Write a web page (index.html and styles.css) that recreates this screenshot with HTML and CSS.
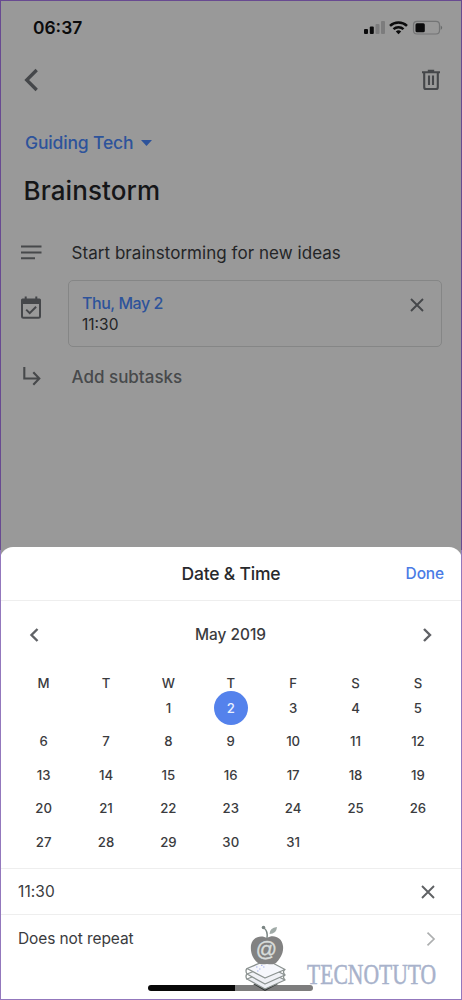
FILE: index.html
```html
<!DOCTYPE html>
<html lang="en">
<head>
<meta charset="utf-8">
<title>Date &amp; Time</title>
<link rel="stylesheet" href="styles.css">
</head>
<body>
<main class="phone">
  <section class="task">
    <header class="status">
      <span class="clock">06:37</span>
      <svg class="status-icons" width="80" height="16" viewBox="0 0 80 16">
        <g fill="#0b0b0c"><rect x="0" y="9" width="4" height="5" rx="1"/><rect x="5.800" y="6.500" width="4" height="7.500" rx="1"/></g>
        <g fill="#7c7c7d"><rect x="11.500" y="4" width="4" height="10" rx="1"/><rect x="17" y="1" width="4" height="13" rx="1"/></g>
        <g fill="none" stroke="#0b0b0c" stroke-width="2.500"><path d="M26 5.800a12.300 12.300 0 0 1 17 0"/><path d="M29.500 9.200a7.300 7.300 0 0 1 10 0"/></g>
        <path d="M31.800 11.600a4 4 0 0 1 5.400 0L34.500 14.300z" fill="#0b0b0c"/>
        <rect x="49.500" y="1.300" width="26" height="12.700" rx="3.500" fill="none" stroke="#747576" stroke-width="1.200"/>
        <rect x="51.500" y="3.200" width="9.300" height="9" rx="1.500" fill="#0b0b0c"/>
        <path d="M76.700 5.500q3 2.200 0 4.400z" fill="#686b6b"/>
      </svg>
    </header>
    <nav class="toolbar">
      <svg width="16" height="24" viewBox="0 0 16 24"><path d="M12.700 2L2.700 12l10 10" fill="none" stroke="#45474a" stroke-width="3.300"/></svg>
      <svg width="20" height="22" viewBox="0 0 20 22"><path d="M1 3.200h18M6.800 1.700h6.400M3.200 3.500V18.200q0 1.800 1.800 1.800h10q1.800 0 1.800-1.800V3.500M8 6.500v9.500M12 6.500v9.500" fill="none" stroke="#45474a" stroke-width="2.100"/></svg>
    </nav>
    <div class="list-name"><span>Guiding Tech</span><svg width="11" height="6" viewBox="0 0 11 6"><path d="M0 0h11L5.500 6z" fill="#2d539b"/></svg></div>
    <h1 class="title">Brainstorm</h1>
    <div class="row details">
      <svg width="22" height="15" viewBox="0 0 22 15"><path d="M1 1.500h20.500M1 7.500h20.500M1 13.300h14" stroke="#47494b" stroke-width="2"/></svg>
      <span class="detail-text">Start brainstorming for new ideas</span>
    </div>
    <div class="row due">
      <svg width="22" height="24" viewBox="0 0 22 24"><path d="M2 5.500h18v14.800q0 1.500-1.500 1.500h-15Q2 21.800 2 20.300z" fill="none" stroke="#45474a" stroke-width="2"/><path d="M1 8V4q0-1.500 1.500-1.500h17Q21 2.500 21 4v4z" fill="#45474a"/><path d="M5.700.5v4M16.300.5v4" stroke="#45474a" stroke-width="2"/><path d="M6.200 13.600l3.500 3.500 6.400-6.400" fill="none" stroke="#45474a" stroke-width="2"/></svg>
      <div class="due-box">
        <div><div class="due-date">Thu, May 2</div><div class="due-time">11:30</div></div>
        <svg class="close" width="14" height="14" viewBox="0 0 14 14"><path d="M1 1l12 12M13 1L1 13" stroke="#45474a" stroke-width="1.900"/></svg>
      </div>
    </div>
    <div class="row subtasks">
      <svg width="22" height="20" viewBox="0 0 22 20"><path d="M4.300 0v11.500h15M13.300 5.200l6 6.300-6 6.300" fill="none" stroke="#47494b" stroke-width="2.100"/></svg>
      <span class="subtask-text">Add subtasks</span>
    </div>
  </section>
  <section class="sheet">
    <header class="sheet-head"><span></span><h2 class="sheet-title">Date &amp; Time</h2><span class="done">Done</span></header>
    <div class="month">
      <svg width="10" height="14" viewBox="0 0 10 14"><path d="M8.500 1l-6 6 6 6" fill="none" stroke="#606266" stroke-width="2.400"/></svg>
      <span class="month-name">May 2019</span>
      <svg width="10" height="14" viewBox="0 0 10 14"><path d="M2 1l6 6-6 6" fill="none" stroke="#606266" stroke-width="2.400"/></svg>
    </div>
    <div class="grid weekdays"><span>M</span><span>T</span><span>W</span><span>T</span><span>F</span><span>S</span><span>S</span></div>
    <div class="grid days">
      <span></span><span></span><span>1</span><span class="selected">2</span><span>3</span><span>4</span><span>5</span>
      <span>6</span><span>7</span><span>8</span><span>9</span><span>10</span><span>11</span><span>12</span>
      <span>13</span><span>14</span><span>15</span><span>16</span><span>17</span><span>18</span><span>19</span>
      <span>20</span><span>21</span><span>22</span><span>23</span><span>24</span><span>25</span><span>26</span>
      <span>27</span><span>28</span><span>29</span><span>30</span><span>31</span>
    </div>
    <div class="option time"><span class="time-value">11:30</span><svg width="14" height="14" viewBox="0 0 14 14"><path d="M1 1l12 12M13 1L1 13" stroke="#5f6164" stroke-width="1.900"/></svg></div>
    <div class="option repeat"><span class="repeat-value">Does not repeat</span><svg width="10" height="14" viewBox="0 0 10 14"><path d="M1.500.7L8 7l-6.500 6.300" fill="none" stroke="#adafb0" stroke-width="1.700"/></svg></div>
  </section>
  <div class="home"></div>
  <div class="watermark">
    <svg width="46" height="68" viewBox="0 0 46 68">
      <path d="M10 60h25L22 67z" fill="#303333"/>
      <g stroke="#8b9290" stroke-width="1.300" stroke-linejoin="round">
        <path d="M4 55L24 47 42 56 22 65z" fill="#eceef3"/>
        <path d="M4 50L24 42 42 51 22 60z" fill="#f0f1f6"/>
        <path d="M4 44.500L24 36 42 45.500 22 54z" fill="#f6f7fc"/>
        <path d="M4 44.500q-2 2 0 5.500M4 50q-2 2 0 5.500M42 45.500q-3 2 0 5.500M42 51q-3 2 0 5" fill="none"/>
      </g>
      <path d="M24 14c6-4 15-1 16 8 1 8-4 14-7 17-3 2-6 1-9 1s-6 1-9-1C11 36 7 30 8 21c2-9 11-10 16-7z" fill="#828282"/>
      <path d="M24 14q1-7-3-10" fill="none" stroke="#7b8583" stroke-width="1.500"/><circle cx="20.500" cy="3.500" r="1.800" fill="#7b8583"/><path d="M26.500 10q0-6 7.500-7-.5 7-7.500 7z" fill="#a0aaa7"/>
      <text x="23.500" y="32" text-anchor="middle" class="at">@</text>
      <path d="M13 43h1.500M16 45h1.500M14 47h1.500M20 43h1.500M18 41.500h1.500" stroke="#a9b5ee" stroke-width="1.200"/>
    </svg>
    <span class="brand">TECNOTUTO</span>
  </div>
</main>
</body>
</html>
```
FILE: styles.css
```css
* { box-sizing: border-box; }
body { margin: 0; font-family: Inter, sans-serif; color: #3a3b3e; }
svg { display: block; flex: none; }
h1, h2 { margin: 0; }
.phone { position: relative; width: 462px; height: 1000px; overflow: hidden; background: #999; }
.phone::after { content: ""; position: absolute; inset: 0; border: 1px solid; border-image: linear-gradient(#684a91 0 55%, #9378bd 55%) 1; pointer-events: none; }
.task { height: 547px; padding-top: 14px; }
.status { display: flex; justify-content: space-between; height: 28px; padding: 0 18px 0 33px; align-items: center; }
.clock { font-size: 17.4px; font-weight: 600; color: #0b0b0c; margin-top: -1px; }
.status-icons { margin-top: -1px; }
.toolbar { display: flex; justify-content: space-between; align-items: center; height: 76px; padding: 0 21px 0 24px; }
.list-name { display: flex; align-items: center; gap: 8px; height: 49px; padding-left: 25px; color: #2d539b; font-size: 17.5px; font-weight: 500; letter-spacing: -.15px; }
.title { height: 49px; padding-left: 23.5px; font: 500 26px/48px Inter, sans-serif; letter-spacing: .1px; color: #151618; }
.row { display: flex; padding-left: 20px; }
.details { height: 64px; align-items: center; gap: 29.5px; padding-top: 9px; }
.detail-text, .subtask-text { font-size: 17px; }
.detail-text { color: #242527; letter-spacing: .05px; }
.due { height: 67px; gap: 26px; align-items: center; }
.due > svg { margin-top: -12px; }
.due-box { display: flex; justify-content: space-between; width: 374px; height: 67px; border: 1px solid #858686; border-radius: 5px; padding: 12px 17px 0 13px; }
.due-date { font-size: 16px; line-height: 21px; font-weight: 500; letter-spacing: -.45px; color: #2d539b; }
.due-time { font-size: 15.5px; line-height: 21px; color: #242527; }
.close { margin-top: 5px; }
.subtasks { height: 60px; align-items: center; gap: 29.5px; color: #47494b; }
.subtask-text { font-weight: 500; }
.sheet { height: 453px; background: #fff; border-radius: 13px 13px 0 0; }
.sheet-head { display: grid; grid-template-columns: 1fr auto 1fr; align-items: center; height: 54px; padding: 0 18px; border-bottom: 1px solid #eee; }
.sheet-title { font-size: 17.5px; font-weight: 500; letter-spacing: -.2px; color: #28292c; }
.done { justify-self: end; font-size: 15.5px; font-weight: 500; letter-spacing: -.15px; color: #4a7be5; }
.month { display: flex; justify-content: space-between; align-items: center; height: 69px; padding: 0 30px 2px 29px; }
.month-name { font-size: 15.4px; font-weight: 500; }
.grid { display: grid; grid-template-columns: repeat(7, 62.4px); padding-left: 12.4px; font-size: 13.2px; font-weight: 500; text-align: center; }
.weekdays { height: 21px; line-height: 27px; }
.days { height: 177px; grid-auto-rows: 33.4px; line-height: 34px; }
.selected { justify-self: center; width: 34px; height: 34px; border-radius: 50%; background: #5482ec; color: #eaf1ff; }
.option { display: flex; justify-content: space-between; align-items: center; border-top: 1px solid #eee; }
.time { height: 46px; padding: 0 27px 0 18px; }
.repeat { height: 48px; padding: 0 26px 0 18px; }
.time-value { font-size: 15.5px; letter-spacing: .1px; }
.repeat-value { font-size: 15.5px; letter-spacing: -.1px; }
.home { position: absolute; left: 148px; top: 985px; width: 165px; height: 6px; border-radius: 3px; background: linear-gradient(90deg, #080808 0 53%, #7d7d7d 53%); }
.watermark { position: absolute; left: 243px; top: 924px; display: flex; align-items: flex-end; }
.at { font: 500 21px "Liberation Sans", sans-serif; fill: #d9dddb; stroke: #d9dddb; stroke-width: .4px; }
.brand { margin: 0 0 1px 18px; font: 29px/34px "Liberation Serif", serif; color: #a8b2cb; -webkit-text-stroke: .5px #a8b2cb; transform: scaleX(.745); transform-origin: left; }
```
